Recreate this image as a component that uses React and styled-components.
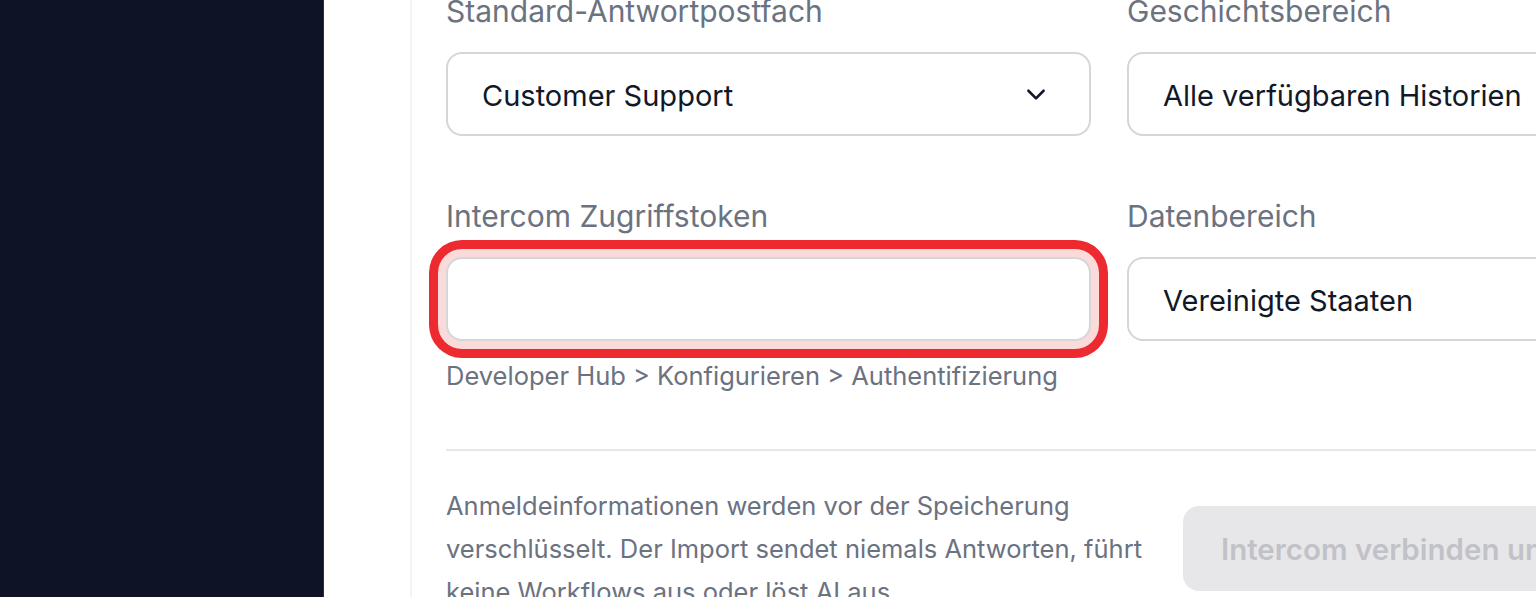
import React from 'react'
import styled, { createGlobalStyle } from 'styled-components'

const GlobalStyle = createGlobalStyle`
    html, body {
        margin: 0;
        padding: 0;
        height: 100%;
        overflow: hidden;
        background: #ffffff;
    }
    body {
        font-family: Inter, "Noto Sans", "Liberation Sans", sans-serif;
        -webkit-font-smoothing: antialiased;
    }
    #root {
        height: 100%;
    }
`

const Shell = styled.div`
    display: flex;
    height: 597px;
    width: 2200px;
`

const Sidebar = styled.aside`
    flex: 0 0 323px;
    background-color: #0e1426;
    border-right: 1px solid #2a3040;
`

const Main = styled.main`
    flex: 1;
    padding-left: 86px;
    background: #ffffff;
`

const Card = styled.section`
    width: 1400px;
    margin-top: -9px;
    padding: 0 34px;
    border-left: 2px solid #f2f3f5;
`

const FieldGrid = styled.div`
    display: grid;
    grid-template-columns: 645px 645px;
    column-gap: 36px;
    row-gap: 60px;
`

const Field = styled.div`
    display: flex;
    flex-direction: column;
`

const Label = styled.label`
    font-size: 30px;
    line-height: 41px;
    color: #6b7280;
    margin-bottom: 20px;
`

const Control = styled.div`
    display: flex;
    align-items: center;
    justify-content: space-between;
    box-sizing: border-box;
    height: 84px;
    padding: 3px 40px 0 34px;
    border: 2px solid #d4d6da;
    border-radius: 16px;
    background: #ffffff;
    font-size: 29px;
    color: #111827;
    box-shadow: ${props => props.focused
        ? '0 0 0 8px #fbdada, 0 0 0 17px #ec2a2f'
        : 'none'};
`

const Chevron = styled.svg`
    width: 26px;
    height: 26px;
    flex: 0 0 auto;
    margin-top: -3px;
`

const Hint = styled.p`
    margin: 17px 0 0;
    font-size: 25.5px;
    line-height: 36px;
    color: #6b7280;
`

const Divider = styled.hr`
    margin: 55px 0 0;
    border: 0;
    border-top: 2px solid #e6e7ea;
`

const Footer = styled.div`
    display: flex;
    align-items: center;
    gap: 26px;
    margin-top: 33px;
`

const Note = styled.p`
    margin: 0;
    flex: 0 0 711px;
    font-size: 25.5px;
    line-height: 43px;
    color: #6b7280;
`

const ConnectButton = styled.button`
    height: 85px;
    padding: 0 38px;
    border: 0;
    border-radius: 16px;
    background: #e7e7ea;
    color: #c1c2c7;
    font-family: inherit;
    font-size: 29.5px;
    font-weight: 600;
    white-space: nowrap;
`

const ChevronDown = () => (
    <Chevron viewBox="0 0 24 24" fill="none" stroke="#111827" strokeWidth="2.4" strokeLinecap="round" strokeLinejoin="round">
        <path d="M5 9l7 7 7-7" />
    </Chevron>
)

export default function App() {
    return (
        <>
            <GlobalStyle />
            <Shell>
                <Sidebar />
                <Main>
                    <Card>
                        <FieldGrid>
                            <Field>
                                <Label>Standard-Antwortpostfach</Label>
                                <Control>
                                    <span>Customer Support</span>
                                    <ChevronDown />
                                </Control>
                            </Field>
                            <Field>
                                <Label>Geschichtsbereich</Label>
                                <Control>
                                    <span>Alle verfügbaren Historien</span>
                                    <ChevronDown />
                                </Control>
                            </Field>
                            <Field>
                                <Label>Intercom Zugriffstoken</Label>
                                <Control focused />
                                <Hint>Developer Hub &gt; Konfigurieren &gt; Authentifizierung</Hint>
                            </Field>
                            <Field>
                                <Label>Datenbereich</Label>
                                <Control>
                                    <span>Vereinigte Staaten</span>
                                    <ChevronDown />
                                </Control>
                            </Field>
                        </FieldGrid>
                        <Divider />
                        <Footer>
                            <Note>
                                Anmeldeinformationen werden vor der Speicherung verschlüsselt. Der Import sendet niemals Antworten, führt keine Workflows aus oder löst AI aus.
                            </Note>
                            <ConnectButton disabled>Intercom verbinden und importieren</ConnectButton>
                        </Footer>
                    </Card>
                </Main>
            </Shell>
        </>
    )
}
